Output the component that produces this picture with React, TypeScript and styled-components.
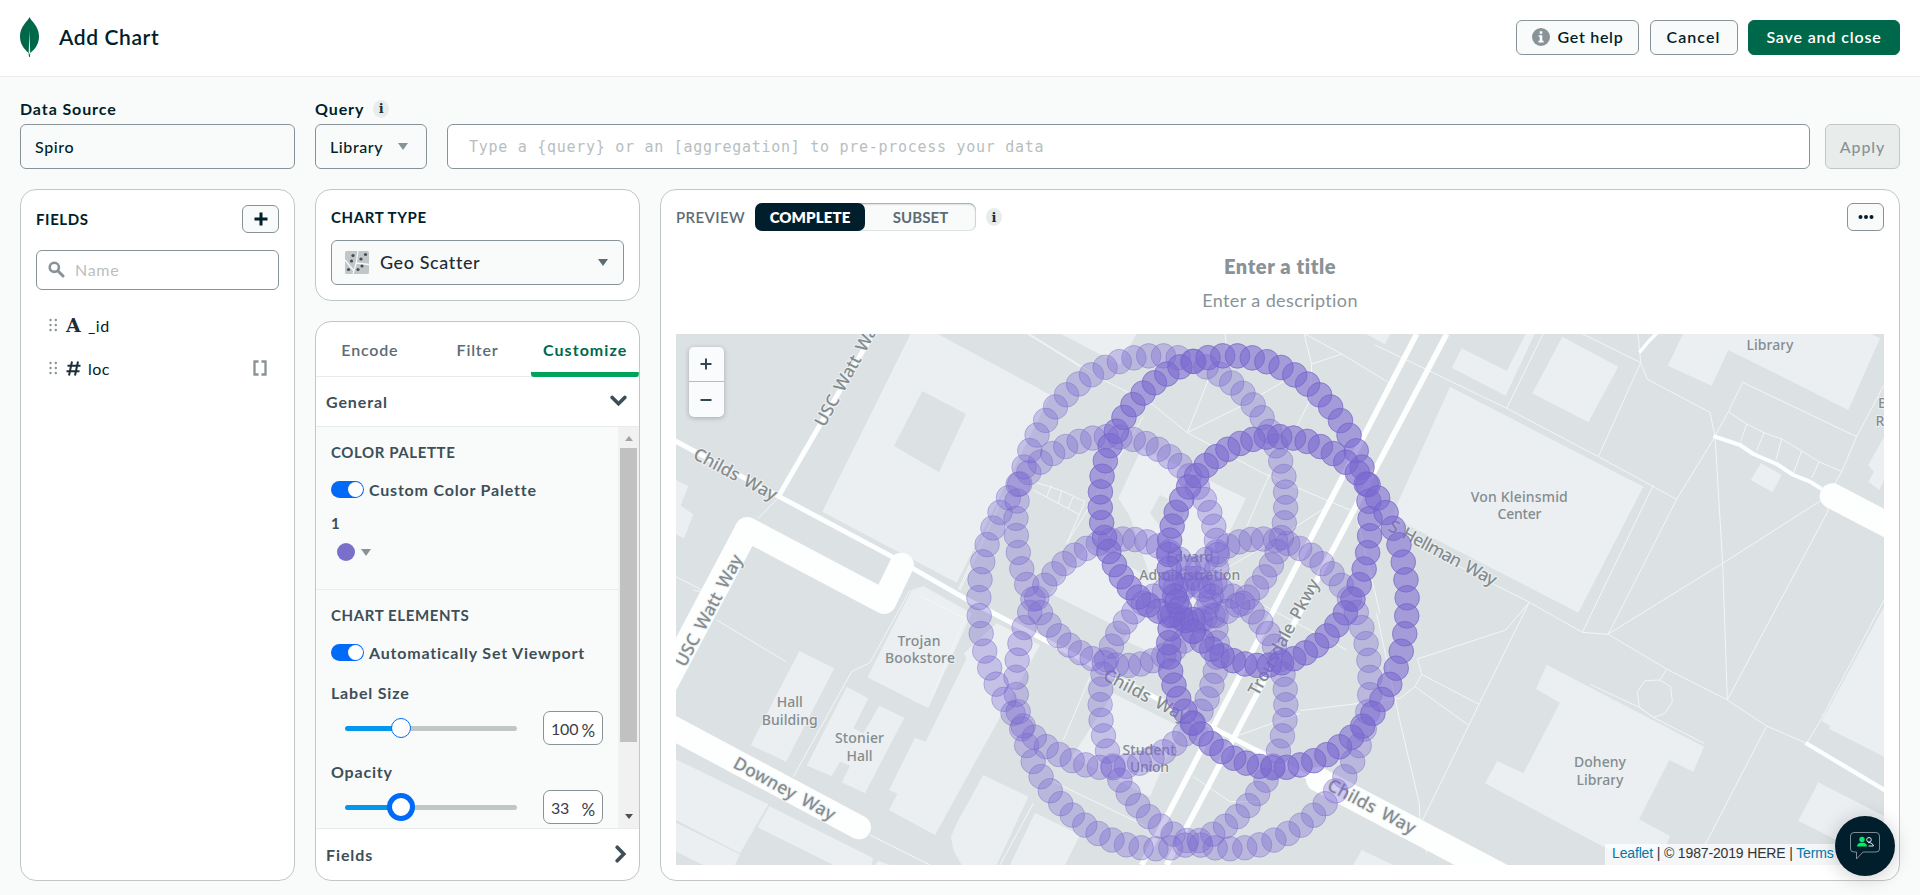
import React from 'react';
import styled, { createGlobalStyle, css } from 'styled-components';

const GlobalStyle = createGlobalStyle`
  *, *::before, *::after { box-sizing: border-box; }
  html, body { margin: 0; padding: 0; }
  body {
    background: #f9fbfa;
    color: #001e2b;
    font-family: Lato, "Liberation Sans", sans-serif;
    font-size: 16px;
    overflow: hidden;
  }
`;

/* ---------- page frame ---------- */

const Page = styled.div`
  height: 895px;
  display: flex;
  flex-direction: column;
`;

const Header = styled.header`
  height: 77px;
  flex: none;
  display: flex;
  align-items: center;
  padding: 0 20px 2px;
  background: #fff;
  border-bottom: 1px solid #e8edeb;
`;

const PageTitle = styled.h1`
  margin: 0 auto 0 20px;
  padding-bottom: 2px;
  font-size: 21px;
  font-weight: 600;
  letter-spacing: 0.6px;
`;

const HeaderActions = styled.div`
  display: flex;
  gap: 10.5px;
`;

const Button = styled.button<{ $width: number; $primary?: boolean; $spacing?: number }>`
  width: ${(p) => p.$width}px;
  height: 35px;
  display: flex;
  align-items: center;
  justify-content: center;
  gap: 8px;
  padding: 0 0 1px;
  border: 1px solid ${(p) => (p.$primary ? '#00684a' : '#889397')};
  border-radius: 6px;
  background: ${(p) => (p.$primary ? '#00684a' : '#f9fbfa')};
  color: ${(p) => (p.$primary ? '#fff' : '#001e2b')};
  font: 600 16px Lato, sans-serif;
  letter-spacing: ${(p) => p.$spacing ?? 0.85}px;
`;

/* ---------- query bar ---------- */

const QueryBar = styled.section`
  display: grid;
  grid-template-columns: 275px 112px 1363px 75px;
  grid-template-rows: 30px 45px;
  column-gap: 20px;
  padding: 17px 20px 0;
  & > :last-child { margin-left: -5px; }
`;

const FieldLabel = styled.div`
  display: flex;
  align-items: center;
  gap: 9px;
  padding-bottom: 1px;
  font-weight: 700;
  letter-spacing: 0.9px;
`;

const ControlBox = styled.div<{ $fill?: string }>`
  height: 45px;
  display: flex;
  align-items: center;
  padding: 0 14px 1px;
  border: 1px solid #889397;
  border-radius: 6px;
  background: ${(p) => p.$fill ?? '#f9fbfa'};
  font-weight: 500;
  letter-spacing: 0.6px;
`;

const LibraryLabel = styled.span`
  width: 68px;
`;

const QueryInput = styled(ControlBox)`
  padding: 0 21px;
  color: #b8bebf;
  font-family: "DejaVu Sans Mono", monospace;
  font-size: 15px;
  font-weight: 400;
  letter-spacing: 0.72px;
`;

const ApplyButton = styled(ControlBox)`
  width: 75px;
  padding: 0 0 1px;
  justify-content: center;
  border-color: #c1c7c6;
  background: #e8edeb;
  color: #889397;
  letter-spacing: 0.9px;
`;

const InfoBadge = styled.span`
  width: 16px;
  height: 18px;
  display: inline-flex;
  align-items: center;
  justify-content: center;
  border-radius: 50%;
  background: #e8edeb;
  color: #1c2d38;
  font: 700 13px/1 "DejaVu Serif", serif;
  letter-spacing: 0;
`;

const Caret = styled.span<{ $color?: string }>`
  border-left: 5px solid transparent;
  border-right: 5px solid transparent;
  border-top: 7px solid ${(p) => p.$color ?? '#889397'};
`;

/* ---------- panels ---------- */

const Workspace = styled.main`
  flex: 1;
  min-height: 0;
  display: grid;
  grid-template-columns: 275px 325px 1240px;
  gap: 20px;
  padding: 20px 20px 14px;
`;

const Panel = styled.section`
  background: #fff;
  border: 1px solid #c1c7c6;
  border-radius: 16px;
  min-height: 0;
`;

const FieldsPanel = styled(Panel)`
  padding: 15px 15px 0;
`;

const PanelHead = styled.div`
  display: flex;
  align-items: center;
  justify-content: space-between;
`;

const Caps = styled.div<{ $color?: string }>`
  color: ${(p) => p.$color ?? '#001e2b'};
  font-size: 15px;
  font-weight: 700;
  letter-spacing: 0.6px;
  line-height: 18px;
`;

const IconButton = styled.button`
  width: 37px;
  height: 28px;
  display: flex;
  align-items: center;
  justify-content: center;
  padding: 0;
  border: 1px solid #889397;
  border-radius: 6px;
  background: #f9fbfa;
`;

const SearchBox = styled.div`
  margin-top: 17px;
  height: 40px;
  display: flex;
  align-items: center;
  gap: 10px;
  padding: 0 11px 2px;
  border: 1px solid #889397;
  border-radius: 6px;
  color: #b8c0c2;
  letter-spacing: 0.7px;
`;

const FieldList = styled.div`
  margin-top: 14px;
`;

const FieldRow = styled.div`
  height: 43px;
  display: flex;
  align-items: center;
  padding: 0 12px 1px 13px;
  & > :last-child:not(span) { margin-left: auto; }
`;

const FieldGlyph = styled.span`
  width: 22px;
  margin-left: 8px;
  display: flex;
  color: #1c2d38;
  font: 700 19px/1 "DejaVu Serif", serif;
`;

const FieldName = styled.span`
  letter-spacing: 0.5px;
`;

const MiddleColumn = styled.div`
  min-height: 0;
  display: flex;
  flex-direction: column;
  gap: 20px;
`;

const ChartTypePanel = styled(Panel)`
  height: 112px;
  flex: none;
  padding: 18px 15px 0;
`;

const ChartTypeSelect = styled(ControlBox)`
  margin-top: 14px;
  gap: 11px;
  padding: 0 15px 1px 13px;
  color: #1c2d38;
  font-size: 18px;
  & > :last-child { margin-left: auto; }
`;

const EncodePanel = styled(Panel)`
  flex: 1;
  display: flex;
  flex-direction: column;
  overflow: hidden;
`;

const Tabs = styled.div`
  height: 55px;
  flex: none;
  display: grid;
  grid-template-columns: repeat(3, 1fr);
  border-bottom: 1px solid #e8edeb;
`;

const Tab = styled.div<{ $active?: boolean }>`
  display: flex;
  align-items: center;
  justify-content: center;
  color: #5c6c75;
  font-weight: 600;
  letter-spacing: 0.8px;
  ${(p) =>
    p.$active &&
    css`
      color: #00684a;
      font-weight: 700;
      letter-spacing: 1.05px;
      padding-bottom: 1px;
      background: linear-gradient(#00a35c, #00a35c) bottom / 100% 5px no-repeat;
      border-radius: 0 0 3px 3px;
      margin-bottom: -1px;
    `}
`;

const SectionRow = styled.div<{ $height: number }>`
  height: ${(p) => p.$height}px;
  flex: none;
  display: flex;
  align-items: center;
  justify-content: space-between;
  padding: 0 12px 1px 10px;
  color: #3d4f58;
  font-weight: 700;
  letter-spacing: 0.9px;
`;

const ScrollArea = styled.div`
  flex: 1;
  min-height: 0;
  display: grid;
  grid-template-columns: 302px 1fr;
  overflow: hidden;
  border-top: 1px solid #e8edeb;
  border-bottom: 1px solid #e8edeb;
  background: #f9fbfa;
`;

const Options = styled.div`
  color: #3d4f58;
  font-weight: 700;
  letter-spacing: 0.8px;
`;

const OptionGroup = styled.div<{ $height?: number }>`
  height: ${(p) => (p.$height ? `${p.$height}px` : 'auto')};
  padding: 16px 15px 0;
  ${(p) => p.$height && css`border-bottom: 1px solid #e8edeb;`}
`;

const ToggleRow = styled.div`
  display: flex;
  align-items: center;
  gap: 5px;
  margin-top: 19px;
  height: 18px;
`;

const Toggle = styled.span`
  width: 33px;
  height: 17px;
  flex: none;
  display: flex;
  justify-content: flex-end;
  padding: 1px;
  border-radius: 9px;
  background: #016bf8;
  &::after {
    content: '';
    width: 15px;
    border-radius: 50%;
    background: #fff;
  }
`;

const SeriesNumber = styled.div`
  margin-top: 15px;
  line-height: 20px;
  font-size: 15px;
`;

const SwatchPicker = styled.div`
  display: flex;
  align-items: center;
  gap: 6px;
  padding: 10px 0 0 6px;
`;

const Swatch = styled.span`
  width: 18px;
  height: 18px;
  border-radius: 50%;
  background: #7b6fcc;
`;

const SliderLabel = styled.div<{ $top: number }>`
  margin-top: ${(p) => p.$top}px;
  line-height: 20px;
`;

const SliderRow = styled.div`
  margin-top: 8px;
  height: 34px;
  display: flex;
  align-items: center;
  justify-content: space-between;
  padding-left: 14px;
`;

const Track = styled.div`
  width: 172px;
  height: 5px;
  border-radius: 3px;
  display: flex;
  align-items: center;
  background: linear-gradient(90deg, #0498ec 32.5%, #c1c7c6 32.5%);
`;

const Handle = styled.span<{ $active?: boolean }>`
  width: ${(p) => (p.$active ? 28 : 20)}px;
  height: ${(p) => (p.$active ? 28 : 20)}px;
  margin-left: ${(p) => (p.$active ? 42 : 46)}px;
  border: ${(p) => (p.$active ? '5px' : '1px')} solid #016bf8;
  border-radius: 50%;
  background: #fff;
`;

const PercentBox = styled.div`
  width: 60px;
  height: 34px;
  display: flex;
  align-items: center;
  justify-content: space-between;
  padding: 0 7px;
  border: 1px solid #889397;
  border-radius: 7px;
  background: #fff;
  color: #3d3d4a;
  font-weight: 400;
  letter-spacing: -0.2px;
  & > :last-child { padding-top: 4px; font-size: 17px; }
`;

const ScrollTrack = styled.div`
  display: flex;
  flex-direction: column;
  align-items: center;
  background: #f1f1f1;
`;

const ScrollArrow = styled.span<{ $down?: boolean }>`
  border-left: 4.5px solid transparent;
  border-right: 4.5px solid transparent;
  ${(p) =>
    p.$down
      ? css`margin: auto 0 9px; border-top: 5px solid #505050;`
      : css`margin: 9px 0 7px; border-bottom: 5px solid #a3a3a3;`}
`;

const ScrollThumb = styled.div`
  width: 17px;
  height: 294px;
  background: #c1c1c1;
`;

/* ---------- preview ---------- */

const PreviewPanel = styled(Panel)`
  padding: 13px 15px 15px;
  display: flex;
  flex-direction: column;
`;

const PreviewBar = styled.div`
  height: 28px;
  flex: none;
  display: flex;
  align-items: center;
  & > :last-child { margin-left: auto; }
`;

const PreviewLabel = styled.span`
  width: 69px;
  color: #5c6c75;
  font-size: 15px;
  font-weight: 600;
  letter-spacing: 0.4px;
`;

const Segmented = styled.div`
  width: 221px;
  height: 28px;
  margin: 0 10px;
  display: grid;
  grid-template-columns: 110px 1fr;
  border-radius: 7px;
  background: #f9fbfa;
  box-shadow: inset 0 1px 2px rgba(0, 30, 43, 0.35), inset 0 0 0 1px #e3e8e6;
`;

const Segment = styled.div<{ $active?: boolean }>`
  display: flex;
  align-items: center;
  justify-content: center;
  padding-bottom: 1px;
  border-radius: 7px;
  font-size: 15px;
  font-weight: ${(p) => (p.$active ? 800 : 700)};
  letter-spacing: ${(p) => (p.$active ? 0.1 : 0.1)}px;
  color: ${(p) => (p.$active ? '#fff' : '#5c6c75')};
  background: ${(p) => (p.$active ? '#001e2b' : 'transparent')};
`;

const ChartTitle = styled.div`
  margin-top: 22px;
  height: 26px;
  line-height: 26px;
  text-align: center;
  color: #889397;
  font-size: 20px;
  font-weight: 800;
  letter-spacing: 0.6px;
`;

const ChartDescription = styled.div`
  margin: 9px 0 22px;
  height: 24px;
  line-height: 24px;
  text-align: center;
  color: #889397;
  font-size: 18px;
  letter-spacing: 0.4px;
`;

const MapFrame = styled.div`
  position: relative;
  flex: 1;
  min-height: 0;
  overflow: hidden;
  background: #dce1e3;
  & > svg { display: block; }
`;

const ZoomControl = styled.div`
  position: absolute;
  top: 13px;
  left: 13px;
  width: 35px;
  height: 70px;
  border-radius: 5px;
  background: #fafbfc;
  box-shadow: 0 1px 5px rgba(0, 0, 0, 0.25);
`;

const ZoomButton = styled.div`
  height: 35px;
  display: flex;
  align-items: center;
  justify-content: center;
  padding-right: 1px;
  &:first-child { border-bottom: 1px solid #bbb; }
`;

const Attribution = styled.div`
  position: absolute;
  right: 0;
  bottom: 0;
  width: 279px;
  height: 21px;
  padding: 0 7px;
  background: rgba(255, 255, 255, 0.7);
  color: #333;
  font: 14px/19px "Liberation Sans", Arial, sans-serif;
  letter-spacing: -0.15px;
  white-space: nowrap;
  a { color: #0078a8; }
`;

const ChatBubble = styled.div`
  position: absolute;
  left: 1835px;
  top: 816px;
  width: 60px;
  height: 60px;
  border-radius: 50%;
  display: flex;
  align-items: center;
  justify-content: center;
  background: #001e2b;
  box-shadow: 0 2px 20px rgba(0, 0, 0, 0.2);
`;

/* ---------- icons ---------- */

const Leaf = () => (
  <svg width="19" height="41" viewBox="0 0 19 41">
    <path
      d="M9.5 0C10.3 2 11.5 3.2 12.6 4.6C16 8.5 19 13.500 19 19.500C19 27 15 32.500 10.200 36L9.900 40H9L8.600 36C4 32 0 27 0 19.500C0 13.500 3 8.500 6.400 4.600C7.500 3.200 8.800 2 9.500 0Z"
      fill="#00684a"
    />
    <path d="M9.500 14L10.200 35.700L9.700 37.500L8.700 35.700Z" fill="#e3f2ec" />
  </svg>
);

const SearchIcon = () => (
  <svg width="17" height="17" viewBox="0 0 17 17" fill="none" stroke="#889397">
    <circle cx="6.300" cy="6.300" r="4.600" strokeWidth="2.600" />
    <path d="M10 10L15 15" strokeWidth="3" strokeLinecap="round" />
  </svg>
);

const DragHandle = () => (
  <svg width="9" height="14" viewBox="0 0 9 14" fill="#889397">
    {[2, 7, 12].map((y) => (
      <React.Fragment key={y}>
        <circle cx="1.500" cy={y} r="1.200" />
        <circle cx="6.800" cy={y} r="1.200" />
      </React.Fragment>
    ))}
  </svg>
);

const HashIcon = () => (
  <svg width="15" height="15" viewBox="0 0 15 15" stroke="#1c2d38" strokeWidth="2" fill="none">
    <path d="M6 0.500L3 14.500M12 0.500L9 14.500M1.500 4.700H14.500M0.500 10.300H13.500" />
  </svg>
);

const BracketIcon = () => (
  <svg width="14" height="16" viewBox="0 0 14 16" stroke="#889397" strokeWidth="2.300" fill="none">
    <path d="M5.500 1.500H1.500V14.500H5.500M8.500 1.500H12.500V14.500H8.500" />
  </svg>
);

const GeoScatterIcon = () => (
  <svg width="24" height="23" viewBox="0 0 24 23">
    <rect width="24" height="23" rx="1.500" fill="#c1c7c6" />
    <path d="M13 0L11 13L8 23M0 9L9 20M11.500 12L24 13.500" stroke="#f9fbfa" strokeWidth="1.300" fill="none" />
    {[[8, 4.500], [6.500, 10], [16, 8], [20.500, 3.500], [17, 15], [13, 18.500], [3.500, 18.500]].map(([x, y]) => (
      <circle key={`${x}-${y}`} cx={x} cy={y} r="1.600" fill="#3d4f58" />
    ))}
  </svg>
);

const Chevron = ({ right }: { right?: boolean }) =>
  right ? (
    <svg width="12" height="18" viewBox="0 0 12 18" fill="none" stroke="#3d4f58" strokeWidth="3.600">
      <path d="M2.200 2.200L8.800 9L2.200 15.800" strokeLinecap="round" />
    </svg>
  ) : (
    <svg width="17" height="12" viewBox="0 0 17 12" fill="none" stroke="#3d4f58" strokeWidth="3.600">
      <path d="M2.200 2.400L8.500 8.800L14.800 2.400" strokeLinecap="round" />
    </svg>
  );

const ChatIcon = () => (
  <svg width="30" height="28" viewBox="0 0 30 28" fill="none">
    <path d="M4 .5H26Q29.500 .5 29.500 4V17Q29.500 20 26 20H13L6.500 27V20H4Q.5 20 .5 17V4Q.5 .5 4 .5Z" stroke="#8b9aa3" strokeWidth=".9" />
    <circle cx="12" cy="7.500" r="2.700" fill="#00ed64" />
    <path d="M7 14.500Q7 11.500 10.500 10.700H13.500Q17 11.500 17 14.500Z" fill="#00ed64" />
    <circle cx="19" cy="7.800" r="2.300" stroke="#dfe6e8" />
    <path d="M18.500 14H23.500Q23 11.500 20 10.600H18" stroke="#dfe6e8" />
  </svg>
);

/* ---------- map ---------- */

type Shapes = { origin: [number, number]; shapes: string[] };

const BUILDINGS: Shapes[] = [
  {
    origin: [660, 320],
    shapes: [
      '755,35 820,35 1172,225 890,788 487,575',
      '48,480 85,498 62,557 100,583 72,655 48,643',
    ],
  },
  {
    origin: [950, 330],
    shapes: [
      '330,10 510,105 560,10',
      '1245,10 1305,43 1322,10',
      '575,355 888,505 770,750 800,860 640,860 540,560 505,505',
      '410,650 560,720 640,780 590,900 520,900 300,790',
      '560,850 660,880 610,970 520,930',
    ],
  },
  {
    origin: [1400, 330],
    shapes: [
      '150,170 730,470 535,848 -25,560',
      '185,55 320,123 378,10 405,10 317,197 155,113',
      '487,20 655,110 565,277 397,190',
      '850,10 1410,10 1440,25 1345,240 985,60 935,167 803,107',
      '1083,400 1145,435 1118,487 1052,450',
      '1452,320 1405,405 1422,425 1405,455 1438,480 1452,450',
    ],
  },
  {
    origin: [660, 590],
    shapes: [
      '418,183 523,235 378,515 272,465',
      '560,290 625,325 580,415 610,430 658,347 733,383 615,610 545,577 570,528 540,515 515,558 440,527',
      '755,0 790,-12 935,70 805,355 622,262',
      '1010,100 1140,165 825,735 687,660 712,612 687,600 765,443 797,455 920,205 912,190',
      '970,555 1105,620 1010,825 905,825 880,780 873,740 890,700',
      '1125,668 1260,735 1215,825 1050,825',
      '48,508 325,643 240,790 48,690',
      '48,698 240,793 225,825 130,825 48,785',
      '328,648 640,805 635,825 520,825 293,712',
      '655,812 690,825 645,825',
    ],
  },
  {
    origin: [950, 590],
    shapes: ['490,310 690,410 600,620 365,500', '1235,780 1330,825 1210,825'],
  },
  {
    origin: [1400, 590],
    shapes: [
      '440,224 912,470 880,545 808,510 717,688 810,738 790,790 655,790 600,765 255,580 292,513 370,550 480,338 408,297',
      '1452,50 1265,393 1290,407 1288,417 1452,500',
      '1255,577 1452,678 1452,822 1195,692',
    ],
  },
];

const COURTYARDS: Shapes[] = [
  { origin: [660, 320], shapes: ['787,213 918,282 837,457 702,378'] },
  { origin: [950, 330], shapes: ['630,495 710,535 680,600 640,600 600,550'] },
];

const PATHS: Shapes[] = [
  {
    origin: [1400, 330],
    shapes: [
      '-75,45 20,90 320,235 595,380 830,508 945,320 930,247 742,148 722,98 545,10',
      '430,10 320,235', '722,98 714,10', '722,98 595,380',
      '945,320 968,700 982,1110', '760,465 547,907', '830,508 625,912',
      '1262,512 968,700 625,912',
      '945,318 985,245 1028,157 1370,320 1325,425 1300,470 1285,498 1283,545 982,1110',
      '985,245 1040,282 1092,308 1145,327 1205,363 1257,395 1325,425',
      '1040,282 1022,335', '1092,308 1070,362', '1145,327 1128,390',
      '1205,363 1180,430', '1257,395 1235,445', '1452,165 1370,320',
      '150,695 280,762 385,815 547,907',
    ],
  },
  {
    origin: [1400, 590],
    shapes: [
      '547,127 625,133 800,237 982,330 1100,408 1220,460 1265,385 1452,30',
      '387,38 237,343 68,690', '387,38 317,120 52,207 65,253 237,343',
      '65,253 45,290 208,407', '45,290 0,325 -300,362', '-70,70 0,395 58,640 60,690 80,790',
      '1100,408 915,765',
      '800,237 780,270 812,290 817,335 795,370 760,382 718,352 712,305 735,272 780,270',
      '570,283 718,352 760,382 912,460', '-495,440 -300,370',
    ],
  },
  {
    origin: [950, 330],
    shapes: [
      '235,10 470,155 610,225 712,308 940,430 1200,540', '712,308 775,150',
      '712,308 880,225 1000,155', '1062,10 1175,72 1085,102', '1175,72 1320,160',
      '1062,10 1085,102 1080,210 1040,290', '825,10 830,60', '960,430 890,590',
      '580,260 400,560 350,640', '250,455 330,480 405,515 350,640', '250,480 390,555',
      '305,465 290,500', '335,480 325,520', '370,500 355,535',
      '1130,530 960,640 820,720', '160,500 30,780', '1220,560 1290,850',
    ],
  },
  {
    origin: [950, 590],
    shapes: [
      '780,420 960,490', '730,560 840,635 930,635', '340,450 425,250',
      '300,570 590,710', '250,640 150,825', '930,40 1190,180',
    ],
  },
  { origin: [660, 320], shapes: ['1100,40 1260,140', '358,530 295,595', '48,770 135,815', '945,700 895,810'] },
  {
    origin: [660, 590],
    shapes: [
      '170,90 378,215', '750,0 630,218 575,245 400,560', '630,735 810,825',
      '775,15 915,85 815,320', '100,0 135,8',
    ],
  },
];

const ROADS: { origin: [number, number]; width: number; points: string; cap?: 'round' }[] = [
  { origin: [660, 320], width: 15, points: '645,30 358,525' },
  { origin: [660, 320], width: 15, points: '40,360 358,530 700,712 920,838 1960,1380' },
  { origin: [660, 320], width: 74, points: '725,735 672,845 262,628 0,1123', cap: 'round' },
  { origin: [660, 590], width: 72, points: '0,393 597,712', cap: 'round' },
  { origin: [950, 330], width: 17, points: '1400,12 575,1605' },
  { origin: [950, 330], width: 17, points: '1490,12 650,1605' },
  { origin: [950, 590], width: 74, points: '1105,568 1350,697 1700,881', cap: 'round' },
  { origin: [1400, 330], width: 12, points: '945,320 1020,345 1060,372 1130,402 1180,435 1230,455 1262,475', cap: 'round' },
  { origin: [1400, 330], width: 76, points: '1297,498 1500,604', cap: 'round' },
  { origin: [1400, 330], width: 10, points: '718,68 745,35 775,5' },
  { origin: [1400, 590], width: 13, points: '1217,459 1460,604' },
];

const PLACES: [string, number, number, number][] = [
  ['Von Kleinsmid', 1519.3, 501.7, 97], ['Center', 1519.5, 519.3, 44],
  ['Trojan', 919, 646, 43], ['Bookstore', 920, 663.3, 70],
  ['Hall', 789.7, 706.7, 26], ['Building', 789.7, 724.7, 56],
  ['Stonier', 859.5, 743, 49], ['Hall', 859.5, 760.7, 26],
  ['Doheny', 1600, 767, 52], ['Library', 1600, 784.7, 47], ['Library', 1770, 350, 47],
  ['B', 1882.5, 408, 9], ['R', 1880, 425.7, 9],
  ['Edvard', 1190, 562, 47], ['Administration', 1189.7, 579.7, 101],
  ['Student', 1149, 755, 53], ['Union', 1149.5, 772, 39],
];

const STREETS: [string, number, number, number, number][] = [
  ['USC Watt Way', 824.5, 428, -61.500, 120], ['Childs Way', 692, 458, 28, 92],
  ['USC Watt Way', 685, 668, -62, 124], ['Downey Way', 732, 767, 28.500, 113],
  ['Childs Way', 1102, 679, 28, 94], ['Childs Way', 1326, 789, 28, 97],
  ['Trousdale Pkwy', 1258, 697, -61.500, 130], ['S Hellman Way', 1387, 530, 28, 120],
];

/* Epitrochoid with R = 6, r = 1, a = 8, sampled every 0.1 up to 16π. */
const SPIRO = Array.from({ length: 503 }, (_, i) => {
  const t = i / 10;
  const x = 7 * Math.sin(t / 6) - 8 * Math.sin((7 * t) / 6);
  const y = 7 * Math.cos(t / 6) - 8 * Math.cos((7 * t) / 6);
  return [1193 + x * 14.28, 602.2 - y * 17.22];
});

const tile = ([x, y]: [number, number]) => `translate(${x} ${y}) scale(${1 / 3})`;

const CampusMap = () => (
  <svg width="1208" height="531" viewBox="676 334 1208 531">
    {BUILDINGS.map((b, i) => (
      <g key={i} transform={tile(b.origin)} fill="#ebeff2">
        {b.shapes.map((s) => <polygon key={s} points={s} />)}
      </g>
    ))}
    {COURTYARDS.map((b, i) => (
      <g key={i} transform={tile(b.origin)} fill="#dce1e3">
        {b.shapes.map((s) => <polygon key={s} points={s} />)}
      </g>
    ))}
    {PATHS.map((b, i) => (
      <g key={i} transform={tile(b.origin)} fill="none" stroke="#f3f6f7" strokeWidth="3">
        {b.shapes.map((s) => <polyline key={s} points={s} />)}
      </g>
    ))}
    {ROADS.map((r) => (
      <polyline
        key={r.points}
        transform={tile(r.origin)}
        points={r.points}
        fill="none"
        stroke="#fdfefe"
        strokeWidth={r.width}
        strokeLinejoin="round"
        strokeLinecap={r.cap}
      />
    ))}
    <g fill="#848c8e" strokeWidth="2" paintOrder="stroke" fontFamily='"Noto Sans", "Open Sans", sans-serif'>
      {PLACES.map(([label, x, y, w], i) => (
        <text key={i} x={x} y={y} stroke="#ebeff2" fontSize="14" fontWeight="500" textAnchor="middle" textLength={w}>
          {label}
        </text>
      ))}
      {STREETS.map(([label, x, y, angle, w], i) => (
        <text key={i} transform={`translate(${x} ${y}) rotate(${angle})`} stroke="#eef1f2" fontSize="17.500" fontWeight="500" wordSpacing="3" textLength={w}>
          {label}
        </text>
      ))}
    </g>
    <g fill="#7b6bd2" fillOpacity=".35" stroke="#7060c4" strokeOpacity=".38" strokeWidth="1">
      {SPIRO.map(([x, y], i) => <circle key={i} cx={x} cy={y} r="12.300" />)}
    </g>
  </svg>
);

/* ---------- app ---------- */

const GREY = '#3d4f58';

export default function App() {
  return (
    <Page>
      <GlobalStyle />
      <Header>
        <Leaf />
        <PageTitle>Add Chart</PageTitle>
        <HeaderActions>
          <Button $width={123} $spacing={0.7}>
            <svg width="18" height="18" viewBox="0 0 18 18">
              <circle cx="9" cy="9" r="9" fill="#889397" />
              <path d="M7.700 3.200H10.300V5.800H7.700ZM6.600 7.200H10.300V12.800H11.600V14.400H6.400V12.800H7.700V8.800H6.600Z" fill="#fff" />
            </svg>
            Get help
          </Button>
          <Button $width={88} $spacing={1.1}>Cancel</Button>
          <Button $width={152} $primary>Save and close</Button>
        </HeaderActions>
      </Header>

      <QueryBar>
        <FieldLabel>Data Source</FieldLabel>
        <FieldLabel>Query <InfoBadge>i</InfoBadge></FieldLabel>
        <span />
        <span />
        <ControlBox>Spiro</ControlBox>
        <ControlBox>
          <LibraryLabel>Library</LibraryLabel>
          <Caret />
        </ControlBox>
        <QueryInput $fill="#fff">
          {'Type a {query} or an [aggregation] to pre-process your data'}
        </QueryInput>
        <ApplyButton>Apply</ApplyButton>
      </QueryBar>

      <Workspace>
        <FieldsPanel>
          <PanelHead>
            <Caps>FIELDS</Caps>
            <IconButton>
              <svg width="14" height="14" viewBox="0 0 14 14" stroke="#001e2b" strokeWidth="3">
                <path d="M7 .5V13.500M.5 7H13.500" />
              </svg>
            </IconButton>
          </PanelHead>
          <SearchBox><SearchIcon />Name</SearchBox>
          <FieldList>
            <FieldRow>
              <DragHandle />
              <FieldGlyph>A</FieldGlyph>
              <FieldName>_id</FieldName>
            </FieldRow>
            <FieldRow>
              <DragHandle />
              <FieldGlyph><HashIcon /></FieldGlyph>
              <FieldName>loc</FieldName>
              <BracketIcon />
            </FieldRow>
          </FieldList>
        </FieldsPanel>

        <MiddleColumn>
          <ChartTypePanel>
            <Caps>CHART TYPE</Caps>
            <ChartTypeSelect>
              <GeoScatterIcon />
              Geo Scatter
              <Caret $color="#5c6c75" />
            </ChartTypeSelect>
          </ChartTypePanel>

          <EncodePanel>
            <Tabs>
              <Tab>Encode</Tab>
              <Tab>Filter</Tab>
              <Tab $active>Customize</Tab>
            </Tabs>
            <SectionRow $height={49}>General <Chevron /></SectionRow>
            <ScrollArea>
              <Options>
                <OptionGroup $height={163}>
                  <Caps $color={GREY}>COLOR PALETTE</Caps>
                  <ToggleRow><Toggle />Custom Color Palette</ToggleRow>
                  <SeriesNumber>1</SeriesNumber>
                  <SwatchPicker><Swatch /><Caret /></SwatchPicker>
                </OptionGroup>
                <OptionGroup>
                  <Caps $color={GREY}>CHART ELEMENTS</Caps>
                  <ToggleRow><Toggle />Automatically Set Viewport</ToggleRow>
                  <SliderLabel $top={22}>Label Size</SliderLabel>
                  <SliderRow>
                    <Track><Handle /></Track>
                    <PercentBox><span>100</span><span>%</span></PercentBox>
                  </SliderRow>
                  <SliderLabel $top={17}>Opacity</SliderLabel>
                  <SliderRow>
                    <Track><Handle $active /></Track>
                    <PercentBox><span>33</span><span>%</span></PercentBox>
                  </SliderRow>
                </OptionGroup>
              </Options>
              <ScrollTrack>
                <ScrollArrow />
                <ScrollThumb />
                <ScrollArrow $down />
              </ScrollTrack>
            </ScrollArea>
            <SectionRow $height={51}>Fields <Chevron right /></SectionRow>
          </EncodePanel>
        </MiddleColumn>

        <PreviewPanel>
          <PreviewBar>
            <PreviewLabel>PREVIEW</PreviewLabel>
            <Segmented>
              <Segment $active>COMPLETE</Segment>
              <Segment>SUBSET</Segment>
            </Segmented>
            <InfoBadge>i</InfoBadge>
            <IconButton>
              <svg width="16" height="4" viewBox="0 0 16 4" fill="#001e2b">
                <circle cx="2.500" cy="2" r="2" />
                <circle cx="8" cy="2" r="2" />
                <circle cx="13.500" cy="2" r="2" />
              </svg>
            </IconButton>
          </PreviewBar>
          <ChartTitle>Enter a title</ChartTitle>
          <ChartDescription>Enter a description</ChartDescription>
          <MapFrame>
            <CampusMap />
            <ZoomControl>
              <ZoomButton>
                <svg width="12" height="12" viewBox="0 0 12 12" stroke="#33484f" strokeWidth="2">
                  <path d="M6 .5V11.500M.5 6H11.500" />
                </svg>
              </ZoomButton>
              <ZoomButton>
                <svg width="12" height="12" viewBox="0 0 12 12" stroke="#33484f" strokeWidth="2">
                  <path d="M.5 6H11.500" />
                </svg>
              </ZoomButton>
            </ZoomControl>
            <Attribution>
              <a>Leaflet</a> | © 1987-2019 HERE | <a>Terms</a>
            </Attribution>
          </MapFrame>
        </PreviewPanel>
      </Workspace>
      <ChatBubble><ChatIcon /></ChatBubble>
    </Page>
  );
}
